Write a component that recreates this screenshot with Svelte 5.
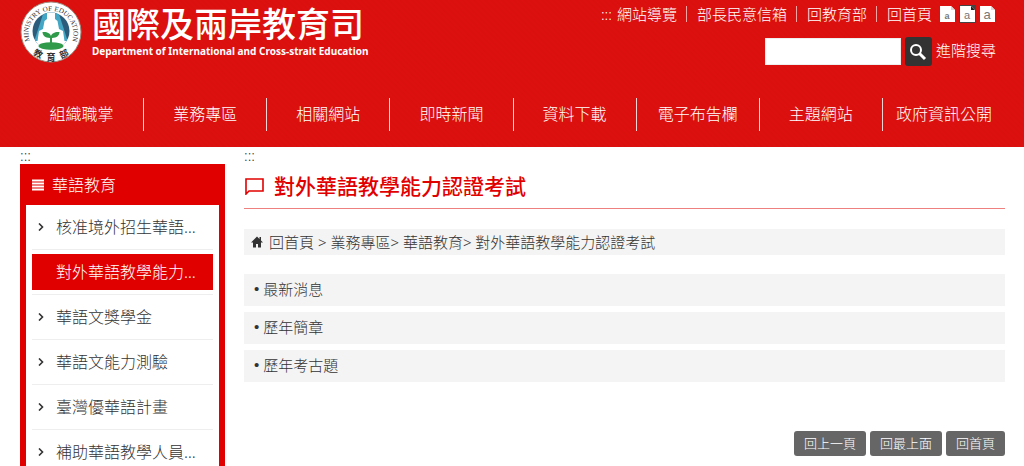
<script lang="ts">
  const topLinks = ['網站導覽', '部長民意信箱', '回教育部', '回首頁'];

  const navLinks = [
    '組織職掌',
    '業務專區',
    '相關網站',
    '即時新聞',
    '資料下載',
    '電子布告欄',
    '主題網站',
    '政府資訊公開',
  ];

  const sideLinks = [
    '核准境外招生華語…',
    '對外華語教學能力…',
    '華語文獎學金',
    '華語文能力測驗',
    '臺灣優華語計畫',
    '補助華語教學人員…',
  ];

  const articles = ['最新消息', '歷年簡章', '歷年考古題'];

  const textSizes = [
    { id: 'small', label: '小字級', size: 9, weight: 700 },
    { id: 'medium', label: '中字級', size: 11, weight: 400 },
    { id: 'large', label: '大字級', size: 13, weight: 400 },
  ];

  let current = $state('對外華語教學能力…');
  let textSize = $state('medium');
  let keyword = $state('');
</script>

<div class="page">
  <header>
    <div class="masthead">
      <a class="brand" href="#home">
        <svg class="emblem" viewBox="0 0 62 62" aria-hidden="true">
          <defs>
            <path id="ring" d="M13.5 46.5 A22.500 22.500 0 1 1 48.500 46.500" />
            <clipPath id="disc"><circle cx="31" cy="30" r="18.5" /></clipPath>
          </defs>
          <circle cx="31" cy="31" r="30" fill="#fff" stroke="#a08d80" />
          <g clip-path="url(#disc)">
            <rect x="12" y="10" width="38" height="40" fill="#2b5c7c" />
            <path d="M24 10 L13 44 H49 L38 10 Z" fill="#43a6c4" />
            <path d="M27 10 V18 L24.500 20 L23 28 L19 30 L16 50 H46 L43 30 L39 28 L37.500 20 L35 18 V10 Z" fill="#fff" />
            <path d="M12 40 H50 V50 H12 Z" fill="#fff" />
          </g>
          <ellipse cx="31" cy="45" rx="12.5" ry="3.8" fill="#309a4b" />
          <path d="M30 43 V37 C25 37 22.500 34 22.500 31 C27 30.500 30.500 32.500 31 35 C31.500 32.500 35 30.500 39.500 31 C39.500 34 37 37 32 37 V43 Z" fill="#309a4b" />
          <text class="ringtext"><textPath href="#ring" startOffset="50%" text-anchor="middle">MINISTRY OF EDUCATION</textPath></text>
          <text class="seal" x="18" y="56" transform="rotate(25 18 53)">教</text>
          <text class="seal" x="31" y="60">育</text>
          <text class="seal" x="44" y="56" transform="rotate(-25 44 53)">部</text>
        </svg>
        <span class="names">
          <strong>國際及兩岸教育司</strong>
          <span>Department of International and Cross-strait Education</span>
        </span>
      </a>

      <div class="tools">
        <div class="toplinks">
          <span class="marker">:::</span>
          {#each topLinks as link}
            <a href="#top">{link}</a>
          {/each}
          <div class="sizes">
            {#each textSizes as s}
              <button
                type="button"
                aria-label={s.label}
                aria-pressed={textSize === s.id}
                onclick={() => (textSize = s.id)}
              >
                <svg viewBox="0 0 17 18" aria-hidden="true">
                  <path d="M0 0 H17 V18 H0 Z" fill={textSize === s.id ? '#444' : 'none'} />
                  <path d="M1 1 H12 L16 5 V17 H1 Z" fill="#fff" />
                  <path d="M12 1 V5 H16 Z" fill={textSize === s.id ? '#222' : '#d8d8d8'} />
                  <text x="8" y="14" font-size={s.size} font-weight={s.weight}>a</text>
                </svg>
              </button>
            {/each}
          </div>
        </div>

        <form class="search" onsubmit={(e) => e.preventDefault()}>
          <input type="text" aria-label="搜尋" bind:value={keyword} />
          <button type="submit" aria-label="搜尋">
            <svg viewBox="0 0 18 18" aria-hidden="true">
              <circle cx="7" cy="7" r="5" fill="none" stroke="#fff" stroke-width="2" />
              <path d="M10.500 10.500 L16 16" stroke="#fff" stroke-width="3" />
            </svg>
          </button>
          <a href="#advanced">進階搜尋</a>
        </form>
      </div>
    </div>

    <nav>
      {#each navLinks as link}
        <a href="#nav">{link}</a>
      {/each}
    </nav>
  </header>

  <div class="body">
    <aside>
      <span class="marker">:::</span>
      <div class="sidebox">
        <h2>
          <svg viewBox="0 0 12 12" aria-hidden="true">
            <path d="M0 1.500 H12 M0 4.500 H12 M0 7.500 H12 M0 10.500 H12" stroke="#fff" stroke-width="2" />
          </svg>
          華語教育
        </h2>
        <ul>
          {#each sideLinks as link}
            <li>
              <a href="#side" class:active={current === link} onclick={() => (current = link)}>
                <svg viewBox="0 0 6 8" aria-hidden="true">
                  <path d="M1 0.500 L4.500 4 L1 7.500" fill="none" stroke="#333" stroke-width="1.600" />
                </svg>
                <span>{link}</span>
              </a>
            </li>
          {/each}
        </ul>
      </div>
    </aside>

    <main>
      <span class="marker">:::</span>
      <h1>
        <svg viewBox="0 0 20 18" aria-hidden="true">
          <path d="M2 17 V2 H19 V14 H5 Z" fill="none" stroke="#e10000" stroke-width="1.600" />
        </svg>
        對外華語教學能力認證考試
      </h1>

      <div class="crumbs">
        <svg viewBox="0 0 12 12" aria-hidden="true">
          <path d="M6 0.500 L0 6.500 H2 V11.500 H5 V8 H7 V11.500 H10 V6.500 H12 L10 4.500 V1 H8.500 V3 Z" fill="#333" />
        </svg>
        <span>
          <a href="#home">回首頁</a> &gt; <a href="#area">業務專區</a>&gt; <a href="#edu">華語教育</a>&gt;
          <a href="#exam">對外華語教學能力認證考試</a>
        </span>
      </div>

      <ul class="articles">
        {#each articles as article}
          <li><a href="#article">{article}</a></li>
        {/each}
      </ul>

      <div class="actions">
        <button type="button" onclick={() => history.back()}>回上一頁</button>
        <button type="button" onclick={() => window.scrollTo(0, 0)}>回最上面</button>
        <button type="button">回首頁</button>
      </div>
    </main>
  </div>
</div>

<style>
  :global(body) {
    margin: 0;
    background: #fff;
  }
  .page {
    height: 100vh;
    overflow: hidden;
    font-family: 'Noto Sans', 'Noto Sans CJK TC', sans-serif;
    font-size: 15px;
    font-weight: 300;
    line-height: 20px;
    color: #333;
  }
  a {
    color: inherit;
    text-decoration: none;
  }
  button {
    padding: 0;
    border: 0;
    font: inherit;
    cursor: pointer;
  }
  svg {
    display: block;
    flex: none;
  }
  ul {
    margin: 0;
    padding: 0;
    list-style: none;
  }

  header {
    padding: 0 19px 16px 20px;
    color: #fff;
    background: repeating-linear-gradient(45deg, #dc110f 0 2px, #d9100e 2px 4px);
  }
  .masthead {
    display: flex;
    justify-content: space-between;
    height: 98px;
  }
  .brand {
    display: flex;
    align-items: flex-start;
    gap: 10px;
    padding-top: 1px;
  }
  .emblem {
    width: 62px;
    height: 62px;
  }
  .ringtext {
    font: 400 7px 'Liberation Serif', serif;
    fill: #333;
  }
  .seal {
    font-size: 9px;
    font-weight: 700;
    text-anchor: middle;
    fill: #333;
  }
  .names {
    display: flex;
    flex-direction: column;
    padding-top: 3px;
  }
  .names strong {
    font-size: 34px;
    font-weight: 500;
    line-height: 40px;
  }
  .names span {
    font: 700 10px/14px 'Noto Sans', sans-serif;
  }

  .tools {
    display: flex;
    flex-direction: column;
    align-items: flex-end;
    padding: 4px 9px 0 0;
  }
  .toplinks {
    display: flex;
    align-items: center;
  }
  .toplinks a {
    padding: 0 9px 0 10px;
    line-height: 16px;
  }
  .toplinks a + a {
    border-left: 1px solid #f3a5a4;
  }
  .toplinks .marker {
    margin-right: -5px;
  }
  .sizes {
    display: flex;
    gap: 3px;
    margin-left: -2px;
  }
  .sizes button {
    background: none;
  }
  .sizes svg {
    width: 17px;
    height: 18px;
  }
  .sizes text {
    font-family: 'Liberation Sans', sans-serif;
    text-anchor: middle;
    fill: #777;
  }
  .search {
    display: flex;
    align-items: center;
    gap: 4px;
    margin-top: 13px;
  }
  .search a {
    padding-bottom: 4px;
  }
  .search input {
    box-sizing: border-box;
    width: 136px;
    height: 27px;
    padding: 0 6px;
    border: 1px solid #eee;
    background: #fff;
    font: inherit;
  }
  .search button {
    display: grid;
    place-items: center;
    width: 27px;
    height: 29px;
    border-radius: 3px;
    background: #333;
  }
  .search svg {
    width: 18px;
    height: 18px;
  }

  nav {
    display: grid;
    grid-template-columns: repeat(8, 1fr);
    font-size: 16px;
    line-height: 33px;
    text-align: center;
    white-space: nowrap;
  }
  nav a + a {
    border-left: 1px solid #fbd5d5;
  }

  .body {
    display: grid;
    grid-template-columns: 205px 1fr;
    gap: 19px;
    padding: 0 19px 0 20px;
  }
  .body .marker {
    display: block;
    height: 17px;
    line-height: 16px;
  }

  .sidebox {
    padding: 0 6px 6px;
    background: #e10000;
  }
  h2 {
    display: flex;
    align-items: center;
    gap: 8px;
    height: 41px;
    margin: 0;
    padding-left: 6px;
    font-size: 16px;
    font-weight: 300;
    color: #fff;
  }
  h2 svg {
    width: 12px;
    height: 12px;
  }
  .sidebox ul {
    padding: 0 6px;
    background: #fff;
  }
  .sidebox li {
    padding: 4px 0;
    border-bottom: 1px solid #eee;
  }
  .sidebox li a {
    display: flex;
    align-items: center;
    gap: 12px;
    height: 36px;
    padding: 0 6px;
    font-size: 16px;
    white-space: nowrap;
  }
  .sidebox li svg {
    width: 6px;
    height: 8px;
  }
  .sidebox .active {
    color: #fff;
    background: #e10000;
  }
  .active svg {
    visibility: hidden;
  }

  h1 {
    display: flex;
    align-items: center;
    gap: 10px;
    height: 44px;
    margin: 0 0 20px;
    border-bottom: 1px solid #ee8080;
    font-size: 21px;
    font-weight: 500;
    color: #e10000;
  }
  h1 svg {
    width: 20px;
    height: 18px;
  }
  .crumbs {
    display: flex;
    align-items: center;
    gap: 6px;
    height: 26px;
    margin-bottom: 19px;
    padding-left: 7px;
    background: #f4f4f4;
  }
  .crumbs svg {
    width: 12px;
    height: 12px;
  }
  .articles {
    display: grid;
    gap: 6px;
  }
  .articles li {
    display: flex;
    gap: 4px;
    padding: 5px 10px 7px;
    background: #f4f4f4;
  }
  .articles li::before {
    content: '•';
    font-family: 'Liberation Sans', sans-serif;
  }
  .actions {
    display: flex;
    justify-content: flex-end;
    gap: 4px;
    margin-top: 49px;
  }
  .actions button {
    height: 25px;
    padding: 0 10px 2px;
    border-radius: 3px;
    background: #666;
    color: #fff;
    font-size: 13px;
  }
</style>
